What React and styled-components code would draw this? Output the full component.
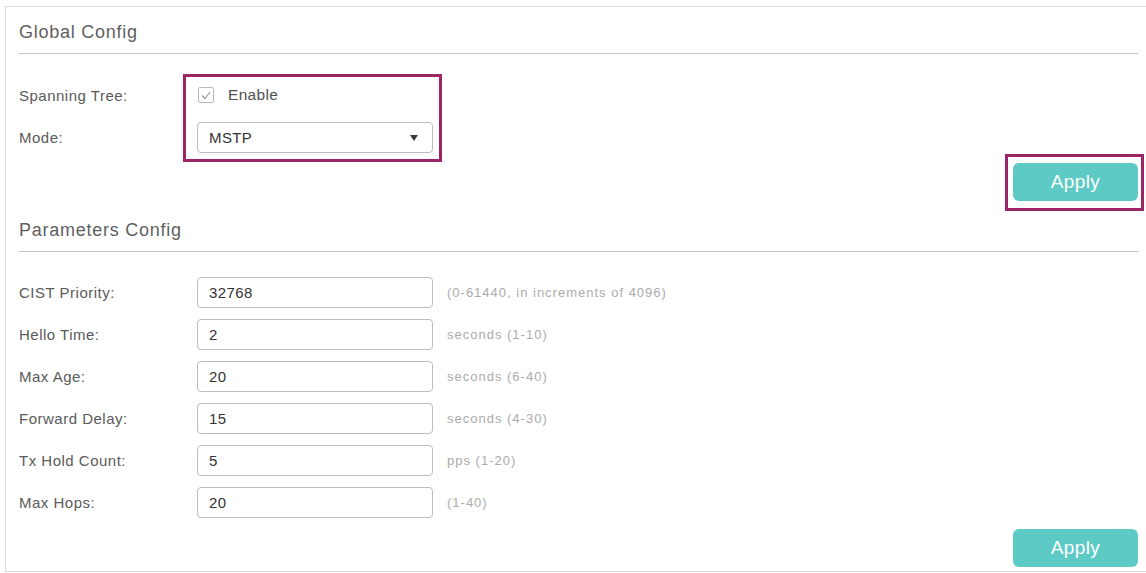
import React from "react";
import styled, { createGlobalStyle } from "styled-components";

const GlobalStyle = createGlobalStyle`
  html, body {
    margin: 0;
    padding: 0;
    background: #ffffff;
    font-family: "Liberation Sans", Arial, sans-serif;
  }
  * { box-sizing: border-box; }
`;

const Page = styled.div`
  padding: 6px 0 0 5px;
  width: 1146px;
  height: 573px;
  overflow: hidden;
`;

const Panel = styled.div`
  width: 1141px;
  border: 1px solid #dcdcdc;
  border-right: none;
  padding: 14px 8px 4px 13px;
  display: flex;
  flex-direction: column;
`;

const SectionTitle = styled.div`
  font-size: 18px;
  line-height: 22px;
  letter-spacing: 0.75px;
  color: #5f5f5f;
  padding-bottom: 10px;
  border-bottom: 1px solid #c4c4c4;
  margin-top: ${(p) => p.$top || 0}px;
`;

const GlobalRows = styled.div`
  display: flex;
  margin-top: 28px;
`;

const LabelColumn = styled.div`
  width: 178px;
  display: flex;
  flex-direction: column;
  gap: 14px;
`;

const ControlColumn = styled.div`
  position: relative;
  width: 236px;
  display: flex;
  flex-direction: column;
  gap: 14px;

  &::after {
    content: "";
    position: absolute;
    inset: -8px -9px -9px -14px;
    border: 3px solid #9d2465;
    pointer-events: none;
  }
`;

const Label = styled.div`
  height: ${(p) => p.$h}px;
  display: flex;
  align-items: center;
  font-size: 15px;
  letter-spacing: 0.5px;
  color: #5a5a5a;
`;

const CheckRow = styled.label`
  height: 26px;
  display: flex;
  align-items: center;
  gap: 14px;
  padding-left: 1px;
  font-size: 15.5px;
  letter-spacing: 0.3px;
  color: #505050;
`;

const CheckBox = styled.span`
  width: 16px;
  height: 16px;
  border: 1px solid #b9b9b9;
  border-radius: 2px;
  display: flex;
  align-items: center;
  justify-content: center;
`;

const Select = styled.div`
  height: 31px;
  border: 1px solid #bdbdbd;
  border-radius: 4px;
  display: flex;
  align-items: center;
  justify-content: space-between;
  padding: 0 14px 0 11px;
  font-size: 15px;
  letter-spacing: 0.4px;
  color: #333333;
`;

const Arrow = styled.span`
  width: 0;
  height: 0;
  border-left: 4px solid transparent;
  border-right: 4px solid transparent;
  border-top: 6px solid #3a3a3a;
`;

const ButtonRow = styled.div`
  display: flex;
  justify-content: flex-end;
  margin-top: ${(p) => p.$top}px;
`;

const ButtonFrame = styled.div`
  position: relative;

  ${(p) =>
    p.$marked &&
    `
    &::after {
      content: "";
      position: absolute;
      inset: -9px -6px -10px -8px;
      border: 3px solid #9d2465;
      pointer-events: none;
    }
  `}
`;

const ApplyButton = styled.button`
  width: 125px;
  height: 38px;
  border: none;
  border-radius: 6px;
  background: #5ecac5;
  color: #ffffff;
  font-family: "Liberation Sans", Arial, sans-serif;
  font-size: 19px;
  letter-spacing: 0.4px;
  padding: 0;
  cursor: pointer;
`;

const ParamList = styled.div`
  display: flex;
  flex-direction: column;
  gap: 11px;
  margin-top: 25px;
`;

const ParamRow = styled.div`
  display: flex;
  align-items: center;
  height: 31px;
`;

const ParamLabel = styled.div`
  width: 178px;
  font-size: 15px;
  letter-spacing: 0.5px;
  color: #5a5a5a;
`;

const TextInput = styled.div`
  width: 236px;
  height: 31px;
  border: 1px solid #bdbdbd;
  border-radius: 4px;
  display: flex;
  align-items: center;
  padding-left: 11px;
  font-size: 15px;
  letter-spacing: 0.4px;
  color: #333333;
`;

const Hint = styled.div`
  margin-left: 14px;
  font-size: 13px;
  letter-spacing: 1px;
  color: #ababab;
`;

const params = [
  { label: "CIST Priority:", value: "32768", hint: "(0-61440, in increments of 4096)" },
  { label: "Hello Time:", value: "2", hint: "seconds (1-10)" },
  { label: "Max Age:", value: "20", hint: "seconds (6-40)" },
  { label: "Forward Delay:", value: "15", hint: "seconds (4-30)" },
  { label: "Tx Hold Count:", value: "5", hint: "pps (1-20)" },
  { label: "Max Hops:", value: "20", hint: "(1-40)" },
];

const App = () => {
  return (
    <Page>
      <GlobalStyle />
      <Panel>
        <SectionTitle>Global Config</SectionTitle>

        <GlobalRows>
          <LabelColumn>
            <Label $h={26}>Spanning Tree:</Label>
            <Label $h={31}>Mode:</Label>
          </LabelColumn>
          <ControlColumn>
            <CheckRow>
              <CheckBox>
                <svg width="10" height="9" viewBox="0 0 10 9">
                  <path d="M1 4.5 L4 7.5 L9 1" fill="none" stroke="#9a9a9a" strokeWidth="1.2" />
                </svg>
              </CheckBox>
              Enable
            </CheckRow>
            <Select>
              MSTP
              <Arrow />
            </Select>
          </ControlColumn>
        </GlobalRows>

        <ButtonRow $top={10}>
          <ButtonFrame $marked>
            <ApplyButton>Apply</ApplyButton>
          </ButtonFrame>
        </ButtonRow>

        <SectionTitle $top={18}>Parameters Config</SectionTitle>

        <ParamList>
          {params.map((p) => (
            <ParamRow key={p.label}>
              <ParamLabel>{p.label}</ParamLabel>
              <TextInput>{p.value}</TextInput>
              <Hint>{p.hint}</Hint>
            </ParamRow>
          ))}
        </ParamList>

        <ButtonRow $top={11}>
          <ButtonFrame>
            <ApplyButton>Apply</ApplyButton>
          </ButtonFrame>
        </ButtonRow>
      </Panel>
    </Page>
  );
};

export default App;
